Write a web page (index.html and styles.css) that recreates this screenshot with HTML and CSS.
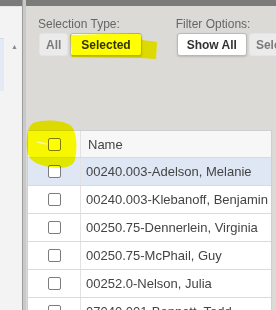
FILE: index.html
```html
<!DOCTYPE html>
<html lang="en">
<head>
    <meta charset="UTF-8">
    <title>Selection</title>
    <link rel="stylesheet" href="styles.css">
</head>
<body>
    <!-- left list panel -->
    <div class="side">
        <div class="side-bar"></div>
        <div class="side-list">
            <div class="side-item"></div>
            <div class="side-arrow">&#9650;</div>
        </div>
    </div>

    <div class="divider"></div>

    <!-- main panel -->
    <div class="main">
        <div class="main-bar"></div>

        <div class="filters">
            <div class="group">
                <div class="label">Selection Type:</div>
                <div class="btns">
                    <button class="btn">All</button>
                    <button class="btn active">Selected</button>
                </div>
            </div>
            <div class="group">
                <div class="label">Filter Options:</div>
                <div class="btns">
                    <button class="btn active">Show All</button>
                    <button class="btn">Selected</button>
                </div>
            </div>
        </div>

        <div class="grid">
            <div class="row head">
                <div class="cell chk"><span class="box"></span></div>
                <div class="cell name">Name</div>
            </div>
            <div class="row sel">
                <div class="cell chk"><span class="box"></span></div>
                <div class="cell name">00240.003-Adelson, Melanie</div>
            </div>
            <div class="row">
                <div class="cell chk"><span class="box"></span></div>
                <div class="cell name">00240.003-Klebanoff, Benjamin</div>
            </div>
            <div class="row">
                <div class="cell chk"><span class="box"></span></div>
                <div class="cell name">00250.75-Dennerlein, Virginia</div>
            </div>
            <div class="row">
                <div class="cell chk"><span class="box"></span></div>
                <div class="cell name">00250.75-McPhail, Guy</div>
            </div>
            <div class="row">
                <div class="cell chk"><span class="box"></span></div>
                <div class="cell name">00252.0-Nelson, Julia</div>
            </div>
            <div class="row">
                <div class="cell chk"><span class="box"></span></div>
                <div class="cell name">07040.001-Bennett, Todd</div>
            </div>
        </div>
    </div>

    <!-- highlighter marks drawn over the screenshot -->
    <svg class="marker" width="276" height="310" viewBox="0 0 276 310">
        <path d="M70 35 L140 33 L142 40 L157 42 L156 59 L141 58 L72 57 Z" fill="#ffff00"/>
        <path d="M33 123 C44 119 62 120 70 125 C78 131 77 150 75 160 C73 168 60 169 50 167 C38 165 28 161 27 150 C26 140 27 127 33 123 Z" fill="#ffff00"/>
        <path d="M37 142 L47 144" stroke="#fff" stroke-width="1.5" opacity="0.7"/>
    </svg>
</body>
</html>
```

FILE: styles.css
```css
* {
    margin: 0;
    padding: 0;
    box-sizing: border-box;
}

body {
    width: 276px;
    height: 310px;
    overflow: hidden;
    display: flex;
    font-family: "Liberation Sans", Arial, sans-serif;
    font-size: 12px;
    color: #444;
    background: #dcdad6;
    position: relative;
}

/* 左侧列表 */
.side {
    width: 22px;
    flex-shrink: 0;
    display: flex;
    flex-direction: column;
    background: #f3f3f3;
}

.side-bar {
    height: 6px;
    background: #7b7b7b;
}

.side-list {
    flex: 1;
    display: flex;
    padding-top: 31px;
    border-top: 1px solid #e6e6e6;
}

.side-item {
    width: 4px;
    height: 53px;
    background: #e3eaf5;
    border-top: 1px solid #d3dcea;
}

.side-arrow {
    margin-left: 7px;
    margin-top: 5px;
    font-size: 7px;
    color: #8a8a8a;
    height: 8px;
}

.divider {
    width: 4px;
    flex-shrink: 0;
    background: #c9c9c9;
    border-left: 1px solid #9c9c9c;
}

/* 主面板 */
.main {
    flex: 1;
    min-width: 0;
    overflow: hidden;
    display: flex;
    flex-direction: column;
}

.main-bar {
    height: 6px;
    flex-shrink: 0;
    background: #7b7b7b;
}

.filters {
    display: flex;
    flex-shrink: 0;
    gap: 34px;
    padding: 11px 0 0 12px;
    height: 124px;
    white-space: nowrap;
}

.label {
    color: #666;
    line-height: 14px;
    margin-bottom: 2px;
}

.btns {
    display: flex;
    gap: 2px;
    margin-left: 1px;
}

.btn {
    font-family: inherit;
    font-size: 12px;
    font-weight: bold;
    height: 23px;
    padding: 0 6px;
    border: 1px solid #e4e4e4;
    background: #ebebeb;
    color: #7a7a7a;
    border-radius: 3px;
}

.btn.active {
    background: #fff;
    color: #333;
    border-color: #b8b8b8;
    box-shadow: 0 1px 2px rgba(0,0,0,0.15);
    padding: 0 10px;
}

.group + .group .btn.active {
    padding: 0 9px;
}

/* 表格 */
.grid {
    flex-shrink: 0;
    margin-left: 1px;
    margin-right: 4px;
    background: #fff;
    border-left: 1px solid #cfcfcf;
    border-right: 1px solid #cfcfcf;
}

.row {
    display: flex;
    height: 28px;
    border-bottom: 1px solid #dadada;
}

.row.head {
    background: #f7f7f7;
    border-top: 1px solid #cfcfcf;
}

.row.sel {
    background: #dfe7f5;
}

.cell {
    display: flex;
    align-items: center;
}

.chk {
    width: 53px;
    justify-content: center;
    border-right: 1px solid #e2e2e2;
}

.box {
    width: 13px;
    height: 13px;
    border: 1px solid #7c7c7c;
    border-radius: 2px;
    background: #fff;
}

.name {
    padding-left: 5px;
    font-size: 13px;
    white-space: nowrap;
}

.head .name {
    padding-left: 7px;
}

.marker {
    position: absolute;
    left: 0;
    top: 0;
    mix-blend-mode: multiply;
    filter: blur(0.5px);
    pointer-events: none;
}
```
